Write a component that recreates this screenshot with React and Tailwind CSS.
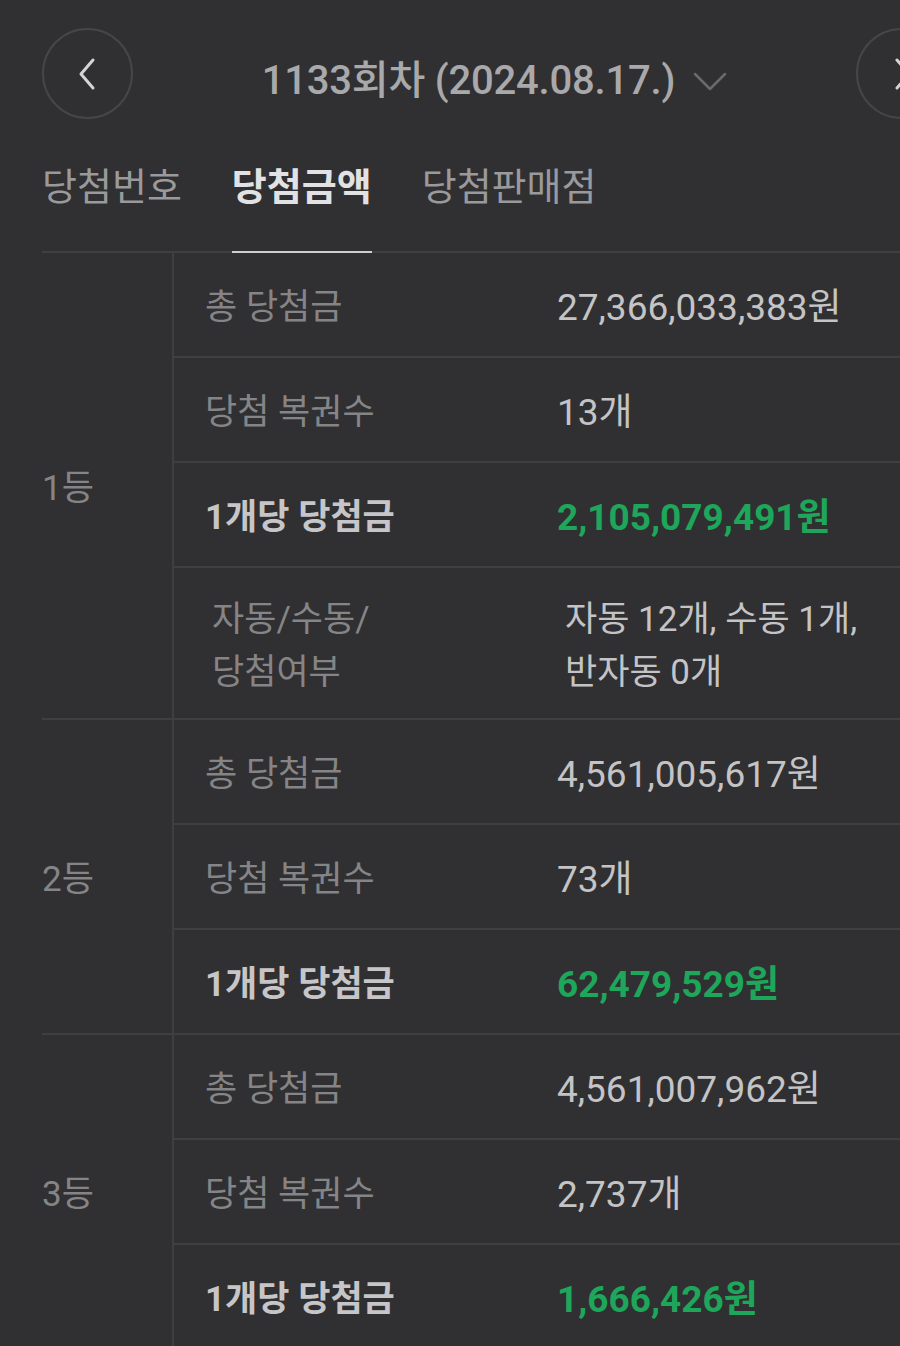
import React from "react";

const F = "font-['Roboto','Noto_Sans_CJK_KR',sans-serif]";

function Circle({ dir }) {
  return (
    <div className="w-[91px] h-[91px] shrink-0 rounded-full border-2 border-[#464648] flex items-center justify-center">
      <svg width="30" height="34" viewBox="0 0 30 34" fill="none">
        {dir === "left" ? (
          <path d="M20 3 L8 17 L20 31" stroke="#d4d4d6" strokeWidth="3" strokeLinecap="round" strokeLinejoin="round" />
        ) : (
          <path d="M10 3 L22 17 L10 31" stroke="#d4d4d6" strokeWidth="3" strokeLinecap="round" strokeLinejoin="round" />
        )}
      </svg>
    </div>
  );
}

function Row({ label, value, bold, green, last, tall }) {
  const h = tall ? "h-[150px]" : last ? "h-[103px]" : "h-[105px]";
  return (
    <div className={`flex ${h} ${last ? "" : "border-b-2 border-[#3f3f41]"}`}>
      <div className={`w-[351px] shrink-0 flex items-center pt-[6px] ${tall ? "pl-[38px]" : "pl-[31px]"}`}>
        <div
          className={`${bold ? "font-bold text-[#c6c6c8]" : "text-[#858587]"} text-[35px] ${tall ? "leading-[53px]" : "leading-[40px]"} whitespace-nowrap`}
        >
          {label}
        </div>
      </div>
      <div className={`flex-1 flex items-center pt-[6px] ${tall ? "pl-[40px]" : "pl-[32px]"}`}>
        <div
          className={`${green ? "text-[#1ea65a] font-bold" : "text-[#c4c4c6]"} ${tall ? "text-[35px] leading-[53px]" : "text-[37px] leading-[40px]"} whitespace-nowrap`}
        >
          {value}
        </div>
      </div>
    </div>
  );
}

function Block({ rank, rows }) {
  return (
    <div className="flex border-b-2 border-[#3f3f41]">
      <div className="w-[130px] shrink-0 flex items-center pt-[7px] text-[35px] text-[#858587]">{rank}</div>
      <div className="flex-1 border-l-2 border-[#3f3f41] flex flex-col">
        {rows.map((r, i) => (
          <Row key={i} {...r} last={i === rows.length - 1} />
        ))}
      </div>
    </div>
  );
}

export default function App() {
  return (
    <div className={`w-[900px] h-[1346px] overflow-hidden bg-[#303032] ${F}`}>
      {/* header */}
      <div className="w-[947px] pt-[28px] pl-[42px] flex items-center justify-between">
        <Circle dir="left" />
        <div className="flex items-center gap-[18px] mt-[14px]">
          <span className="text-[40px] font-medium text-[#a9a9ab] leading-[44px] tracking-[-0.2px]">
            1133회차 (2024.08.17.)
          </span>
          <svg width="34" height="20" viewBox="0 0 34 20" fill="none">
            <path d="M2 3 L17 18 L32 3" stroke="#6a6a6c" strokeWidth="2.5" strokeLinecap="round" strokeLinejoin="round" />
          </svg>
        </div>
        <Circle dir="right" />
      </div>

      {/* tabs */}
      <div className="ml-[42px] mt-[46px] flex gap-[50px] border-b-2 border-[#3f3f41]">
        <div className="text-[38px] leading-[44px] pb-[42px] text-[#9a9a9c]">당첨번호</div>
        <div className="text-[38px] leading-[44px] pb-[42px] font-bold text-[#e2e2e4] border-b-2 border-[#cfcfd1] -mb-[2px]">
          당첨금액
        </div>
        <div className="text-[38px] leading-[44px] pb-[42px] text-[#9a9a9c]">당첨판매점</div>
      </div>

      {/* table */}
      <div className="ml-[42px] flex flex-col">
        <Block
          rank="1등"
          rows={[
            { label: "총 당첨금", value: "27,366,033,383원" },
            { label: "당첨 복권수", value: "13개" },
            { label: "1개당 당첨금", value: "2,105,079,491원", bold: true, green: true },
            {
              label: (
                <>
                  자동/수동/
                  <br />
                  당첨여부
                </>
              ),
              value: (
                <>
                  자동 12개, 수동 1개,
                  <br />
                  반자동 0개
                </>
              ),
              tall: true,
            },
          ]}
        />
        <Block
          rank="2등"
          rows={[
            { label: "총 당첨금", value: "4,561,005,617원" },
            { label: "당첨 복권수", value: "73개" },
            { label: "1개당 당첨금", value: "62,479,529원", bold: true, green: true },
          ]}
        />
        <Block
          rank="3등"
          rows={[
            { label: "총 당첨금", value: "4,561,007,962원" },
            { label: "당첨 복권수", value: "2,737개" },
            { label: "1개당 당첨금", value: "1,666,426원", bold: true, green: true },
          ]}
        />
      </div>
    </div>
  );
}
